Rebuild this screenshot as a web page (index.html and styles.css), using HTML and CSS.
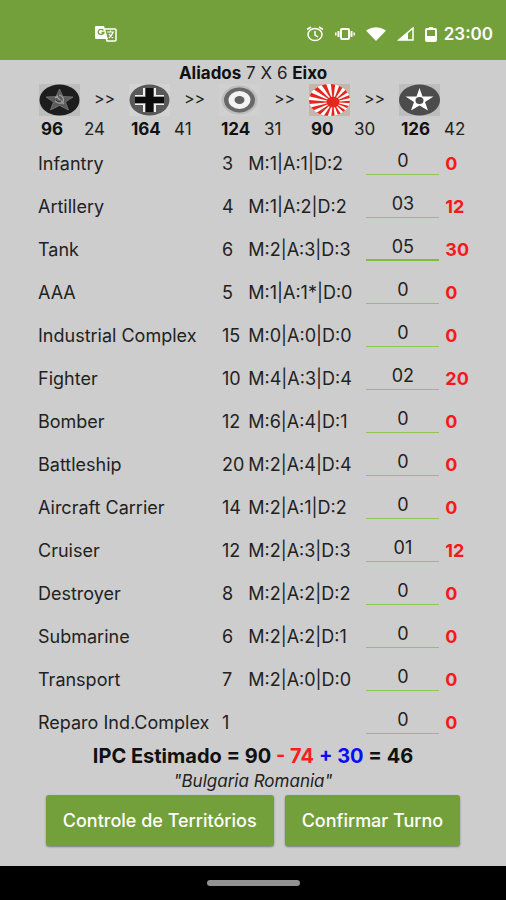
FILE: index.html
```html
<!DOCTYPE html>
<html lang="pt-BR">
<head>
  <meta charset="UTF-8" />
  <meta name="viewport" content="width=device-width, initial-scale=1.0"/>
  <title>IPC - Controle de Turno</title>
  <link rel="stylesheet" href="styles.css">
</head>
<body>

  <header class="status-bar">
    <svg class="translate-icon" width="22" height="16" viewBox="0 0 22 16">
      <path d="M9 3h11q1 0 1 1v10q0 1-1 1h-8z" fill="#74a03c" stroke="#fff" stroke-width="1.5"/>
      <path d="M1 0h8l4 13H1q-1 0-1-1V1q0-1 1-1z" fill="#fff"/>
      <path d="M8.500 4.500a3 2.500 0 1 0 .5 2H6.500" fill="none" stroke="#74a03c" stroke-width="1.300"/>
      <path d="M12 6h7M15.500 4.500V6M18 6q-1 4-4 6M14 8l4 4" fill="none" stroke="#fff" stroke-width="1.200"/>
    </svg>
    <div class="status-icons">
      <svg width="18" height="16" viewBox="0 0 18 16" fill="none" stroke="#fff" stroke-width="1.500">
        <ellipse cx="9" cy="8.500" rx="7" ry="6"/>
        <path d="M1 3.500L5 1M17 3.500L13 1M9 5v4l3 2"/>
      </svg>
      <svg width="20" height="14" viewBox="0 0 20 14" fill="none" stroke="#fff">
        <rect x="6" y="2" width="8" height="10" rx="1" stroke-width="2"/>
        <path d="M3.500 4v6M16.500 4v6" stroke-width="2"/>
        <path d="M.8 5.500v3M19.200 5.500v3" stroke-width="1.500"/>
      </svg>
      <svg width="20" height="14" viewBox="0 0 20 14">
        <path d="M0 3.500Q10-3 20 3.500L10 14z" fill="#fff"/>
      </svg>
      <svg width="17" height="14" viewBox="0 0 17 14">
        <path d="M16 1v12H2z" fill="none" stroke="#fff" stroke-width="1.500"/>
        <path d="M11 5v8H1z" fill="#fff"/>
      </svg>
      <svg width="12" height="15" viewBox="0 0 12 15">
        <path d="M4 0h4v2H4z" fill="#fff"/>
        <rect x="1" y="2" width="10" height="12" rx="1" fill="none" stroke="#fff" stroke-width="2"/>
        <path d="M2 9h8v4H2z" fill="#fff"/>
      </svg>
      <span class="clock">23:00</span>
    </div>
  </header>

  <main>
    <h1 class="score"><b>Aliados</b> 7 X 6 <b>Eixo</b></h1>

    <div class="nations">
      <div class="nation">
        <svg class="flag" viewBox="0 0 41 32">
          <rect width="41" height="32" fill="#bdbdbd"/>
          <ellipse cx="20.500" cy="16" rx="20" ry="15.500" fill="#1d1d1d"/>
          <path d="M20.500 5l3.500 7.500 10 .5-7.500 5 3 8-9-4.500-9 4.500 3-8L7 13l10-.5z" fill="#5c5c5c" stroke="#808080" stroke-width=".7"/>
          <path d="M20 11q6 2 4 7-3 3-8-1M17 12l8 8M16 14l3-2" fill="none" stroke="#a0a0a0" stroke-width="1.200"/>
          <path d="M17 16q2 3 5 1" fill="none" stroke="#333" stroke-width="1"/>
        </svg>
        <span class="next">&gt;&gt;</span>
        <b>96</b>
        <span>24</span>
      </div>
      <div class="nation">
        <svg class="flag" viewBox="0 0 41 32">
          <rect width="41" height="32" fill="#d3d3d3"/>
          <ellipse cx="20.500" cy="16" rx="20" ry="15.500" fill="#595959"/>
          <path d="M14 4h13v7h8v10h-8v7H14v-7H6V11h8z" fill="#f0f0f0"/>
          <path d="M16 4h9v8.500h10v7H25V28h-9v-8.500H6v-7h10z" fill="#555"/>
          <path d="M17 4h7v9h11v6H24v9h-7v-9H6v-6h11z" fill="#0c0c0c"/>
        </svg>
        <span class="next">&gt;&gt;</span>
        <b>164</b>
        <span>41</span>
      </div>
      <div class="nation">
        <svg class="flag" viewBox="0 0 41 32">
          <rect width="41" height="32" fill="#d0d0d0"/>
          <ellipse cx="20.500" cy="16" rx="18" ry="14.500" fill="#bcbcbc"/>
          <ellipse cx="20.500" cy="16" rx="15.500" ry="12.500" fill="#686868"/>
          <ellipse cx="20.500" cy="16" rx="11" ry="9" fill="#f3f3f3"/>
          <ellipse cx="20.500" cy="16" rx="5" ry="4" fill="#606060"/>
        </svg>
        <span class="next">&gt;&gt;</span>
        <b>124</b>
        <span>31</span>
      </div>
      <div class="nation">
        <svg class="flag" viewBox="0 0 41 32">
          <defs>
            <clipPath id="sunClip"><ellipse cx="20.500" cy="16" rx="20.500" ry="16"/></clipPath>
          </defs>
          <rect width="41" height="32" fill="#c6b5ad"/>
          <g clip-path="url(#sunClip)">
            <rect width="41" height="32" fill="#fff"/>
            <g id="sunRays" fill="#e6251f"></g>
            <ellipse cx="24" cy="18" rx="6.500" ry="5.500" fill="#e6251f"/>
          </g>
        </svg>
        <span class="next">&gt;&gt;</span>
        <b>90</b>
        <span>30</span>
      </div>
      <div class="nation">
        <svg class="flag" viewBox="0 0 41 32">
          <rect width="41" height="32" fill="#bdbdbd"/>
          <ellipse cx="20.500" cy="16" rx="20.500" ry="15.500" fill="#4c4c4c"/>
          <path d="M20.500 4l3 8.500h11l-8.500 5.500 3 8.500-8.500-5-8.500 5 3-8.500-8.500-5.500h11z" fill="#fff"/>
          <ellipse cx="20.500" cy="16.500" rx="4" ry="3.500" fill="#4c4c4c"/>
        </svg>
        <span></span>
        <b>126</b>
        <span>42</span>
      </div>
    </div>

    <table class="units">
      <colgroup>
        <col class="col-name">
        <col class="col-cost">
        <col class="col-stats">
        <col class="col-amount">
        <col class="col-total">
      </colgroup>
      <tbody id="unitRows"></tbody>
    </table>

    <p class="estimate">IPC Estimado = 90 <span class="spent">- 74</span> <span class="income">+ 30</span> = 46</p>
    <p class="territories">"Bulgaria Romania"</p>

    <div class="actions">
      <button type="button">Controle de Territórios</button>
      <button type="button">Confirmar Turno</button>
    </div>
  </main>

  <footer class="nav-bar"><div class="handle"></div></footer>

  <script>
    // name, cost, stats, amount
    const units = [
      ['Infantry', 3, 'M:1|A:1|D:2', '0'],
      ['Artillery', 4, 'M:1|A:2|D:2', '03'],
      ['Tank', 6, 'M:2|A:3|D:3', '05'],
      ['AAA', 5, 'M:1|A:1*|D:0', '0'],
      ['Industrial Complex', 15, 'M:0|A:0|D:0', '0'],
      ['Fighter', 10, 'M:4|A:3|D:4', '02'],
      ['Bomber', 12, 'M:6|A:4|D:1', '0'],
      ['Battleship', 20, 'M:2|A:4|D:4', '0'],
      ['Aircraft Carrier', 14, 'M:2|A:1|D:2', '0'],
      ['Cruiser', 12, 'M:2|A:3|D:3', '01'],
      ['Destroyer', 8, 'M:2|A:2|D:2', '0'],
      ['Submarine', 6, 'M:2|A:2|D:1', '0'],
      ['Transport', 7, 'M:2|A:0|D:0', '0'],
      ['Reparo Ind.Complex', 1, '', '0']
    ];

    document.getElementById('unitRows').innerHTML = units.map(([name, cost, stats, amount], i) => `
      <tr>
        <td><label for="unit${i}">${name}</label></td>
        <td>${cost}</td>
        <td>${stats}</td>
        <td class="amount"><input id="unit${i}" class="${name === 'Tank' ? 'active' : ''}" type="text" inputmode="numeric" value="${amount}"></td>
        <td class="total">${cost * Number(amount)}</td>
      </tr>
    `).join('');

    // 16 rays from the sun's centre
    const rays = [];
    for (let i = 0; i < 16; i++) {
      const a = (i * 22.5 - 5.6) * Math.PI / 180;
      const b = a + 11.25 * Math.PI / 180;
      rays.push(`<path d="M24 18L${24 + 50 * Math.cos(a)} ${18 + 40 * Math.sin(a)}L${24 + 50 * Math.cos(b)} ${18 + 40 * Math.sin(b)}z"/>`);
    }
    document.getElementById('sunRays').innerHTML = rays.join('');
  </script>
</body>
</html>
```
FILE: styles.css
```css
* {
  box-sizing: border-box;
  margin: 0;
  padding: 0;
}

body {
  display: flex;
  flex-direction: column;
  min-height: 100vh;
  background: #cdcdcd;
  color: #222;
  font-family: Inter, Roboto, sans-serif;
  font-size: 18px;
  line-height: 20px;
}

.status-bar {
  display: flex;
  justify-content: space-between;
  align-items: center;
  height: 60px;
  padding: 8px 13px 0 95px;
  background: #74a03c;
  color: #fff;
}

.status-icons {
  display: flex;
  align-items: center;
  gap: 11px;
}

.clock {
  margin-left: -4px;
  font-size: 17px;
  font-weight: 600;
}

main {
  flex: 1;
  padding: 2px 0 18px;
}

.score {
  font-size: 17px;
  font-weight: 400;
  line-height: 22px;
  text-align: center;
}

.score b,
.nation b {
  color: #111;
  font-weight: 700;
}

.nations {
  display: grid;
  grid-template-columns: repeat(5, 1fr);
  padding: 0 17px 0 39px;
}

.nation {
  display: grid;
  grid-template-columns: 45px 1fr;
  row-gap: 3px;
  font-size: 17px;
}

.nation b {
  padding-left: 2px;
}

.flag {
  display: block;
  width: 41px;
  height: 32px;
}

.next {
  padding: 4px 0 0 10px;
  font-size: 16px;
}

.units {
  width: calc(100% - 68px);
  margin: 3px 30px 0 38px;
  border-collapse: collapse;
  table-layout: fixed;
}

.col-name {
  width: 42%;
}

.col-cost {
  width: 6%;
}

.col-stats {
  width: 27%;
}

.col-amount {
  width: 18%;
}

.col-total {
  width: 7%;
}

.units td {
  height: 43px;
  vertical-align: middle;
  white-space: nowrap;
}

.units .amount {
  padding: 0 6px 5px 0;
}

.units input {
  display: block;
  width: 100%;
  height: 28px;
  border: none;
  border-bottom: 1px solid #8ec652;
  border-radius: 0;
  outline: none;
  background: transparent;
  color: #222;
  font: inherit;
  text-align: center;
}

.units input.active,
.units input:focus {
  border-bottom: 2px solid #7fbd3a;
}

.units .total {
  color: #f51a1a;
  font-weight: 700;
}

.estimate {
  color: #111;
  font-size: 20px;
  font-weight: 700;
  line-height: 24px;
  text-align: center;
}

.spent {
  color: #fb1c1c;
}

.income {
  color: #0c0cf5;
}

.territories {
  font-size: 17px;
  font-style: italic;
  line-height: 27px;
  text-align: center;
}

.actions {
  display: flex;
  justify-content: center;
  gap: 11px;
}

.actions button {
  height: 51px;
  padding: 0 17px;
  border: none;
  border-radius: 3px;
  background: #74a03c;
  box-shadow: 0 1px 2px rgba(0, 0, 0, 0.4);
  color: #fff;
  font: inherit;
  font-weight: 500;
  cursor: pointer;
}

.nav-bar {
  display: flex;
  align-items: center;
  justify-content: center;
  height: 34px;
  background: #000;
}

.handle {
  width: 93px;
  height: 6px;
  border-radius: 3px;
  background: #929292;
}
```
